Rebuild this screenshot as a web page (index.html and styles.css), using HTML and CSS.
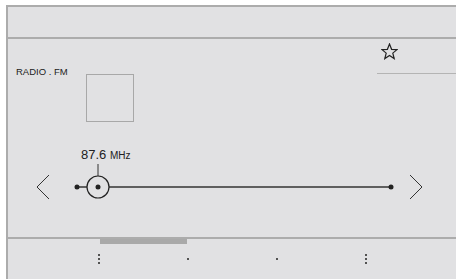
FILE: index.html
```html
<!DOCTYPE html>
<html lang="en">

<head>
    <meta charset="UTF-8">
    <title>Radio FM</title>
    <link rel="stylesheet" href="styles.css">
</head>

<body>
    <div class="screen">
        <div class="header"></div>

        <div class="main">
            <div class="top">
                <div class="station">
                    <span class="station-name">RADIO . FM</span>
                    <div class="cover"></div>
                </div>
                <div class="fav">
                    <svg width="17" height="17" viewBox="0 0 17 17">
                        <polygon points="8.5,1 10.6,6.3 16,6.6 11.8,10.1 13.2,15.6 8.5,12.5 3.8,15.6 5.2,10.1 1,6.6 6.4,6.3"
                            fill="none" stroke="#222" stroke-width="1.2" stroke-linejoin="miter" />
                    </svg>
                </div>
            </div>

            <div class="freq">87.6 <span class="unit">MHz</span></div>

            <div class="tuner">
                <!-- bouton station precedente -->
                <svg class="chevron" width="14" height="26" viewBox="0 0 14 26">
                    <polyline points="13,1 1,13 13,25" fill="none" stroke="#333" stroke-width="1" />
                </svg>
                <svg class="track" width="330" height="38" viewBox="0 0 330 38">
                    <line x1="28" y1="1" x2="28" y2="13" stroke="#333" stroke-width="1" />
                    <line x1="7" y1="24" x2="321" y2="24" stroke="#333" stroke-width="1.5" />
                    <circle cx="7" cy="24" r="2.5" fill="#222" />
                    <circle cx="321" cy="24" r="2.5" fill="#222" />
                    <circle cx="28" cy="24" r="11" fill="#e1e1e3" stroke="#222" stroke-width="1.2" />
                    <circle cx="28" cy="24" r="2.5" fill="#222" />
                </svg>
                <!-- bouton station suivante -->
                <svg class="chevron" width="14" height="26" viewBox="0 0 14 26">
                    <polyline points="1,1 13,13 1,25" fill="none" stroke="#333" stroke-width="1" />
                </svg>
            </div>
        </div>

        <div class="footer">
            <div class="indicator"></div>
            <div class="tab"><span class="dot"></span><span class="dot"></span><span class="dot"></span></div>
            <div class="tab"><span class="dot"></span></div>
            <div class="tab"><span class="dot"></span></div>
            <div class="tab"><span class="dot"></span><span class="dot"></span><span class="dot"></span></div>
        </div>
    </div>
</body>

</html>
```

FILE: styles.css
```css
html,
body {
    margin: 0;
    background-color: #fff;
    font-family: "Liberation Sans", Arial, sans-serif;
    color: #222;
}

.screen {
    margin: 5px 0 0 6px;
    height: 274px;
    border-top: 2px solid #acacac;
    border-left: 2px solid #acacac;
    background-color: #e1e1e3;
    box-sizing: border-box;
    display: flex;
    flex-direction: column;
}

.header {
    height: 30px;
    border-bottom: 2px solid #acacac;
}

.main {
    height: 198px;
    display: flex;
    flex-direction: column;
}

.top {
    display: flex;
    justify-content: space-between;
    align-items: flex-start;
}

.station {
    display: flex;
    align-items: flex-start;
    padding: 28px 0 0 8px;
}

.station-name {
    width: 54px;
    font-size: 9.5px;
    line-height: 10px;
    white-space: nowrap;
}

.cover {
    width: 46px;
    height: 46px;
    margin: 7px 0 0 16px;
    border: 1px solid #a8a8a8;
}

.fav {
    width: 79px;
    height: 35px;
    border-bottom: 1px solid #b4b4b4;
    box-sizing: border-box;
    padding: 4px 0 0 4px;
}

.freq {
    margin: 26px 0 0 73px;
    font-size: 13px;
    line-height: 14px;
}

.unit {
    font-size: 10px;
}

.tuner {
    display: flex;
    align-items: flex-end;
    padding-left: 28px;
}

.chevron {
    margin-bottom: 1px;
}

.track {
    display: block;
    margin: 0 9px 0 20px;
}

.footer {
    position: relative;
    height: 40px;
    border-top: 2px solid #acacac;
    display: grid;
    grid-template-columns: repeat(4, 89px);
    padding-left: 46px;
}

.indicator {
    position: absolute;
    top: 0;
    left: 92px;
    width: 87px;
    height: 5px;
    background-color: #a9a9a9;
}

.tab {
    display: flex;
    flex-direction: column;
    align-items: center;
    justify-content: center;
    gap: 2px;
}

.dot {
    width: 2px;
    height: 2px;
    border-radius: 1px;
    background-color: #222;
}
```
